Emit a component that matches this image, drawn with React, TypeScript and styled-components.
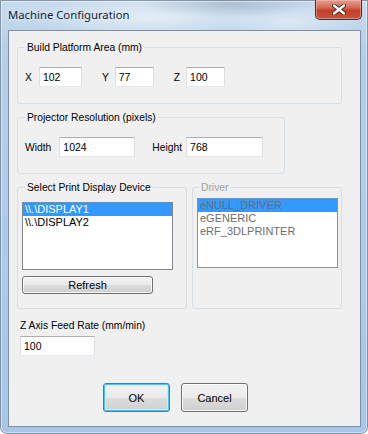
import * as React from 'react'
import styled, { createGlobalStyle } from 'styled-components'

const Global = createGlobalStyle`
  html, body { margin: 0; padding: 0; background: #fff; }
  * { box-sizing: border-box; }
`

const Window = styled.div`
  width: 368px;
  height: 434px;
  display: flex;
  flex-direction: column;
  padding: 0 7px 7px 8px;
  border-radius: 0 0 7px 7px;
  overflow: hidden;
  background:
    radial-gradient(ellipse 90px 14px at 230px 4px, rgba(120, 140, 160, 0.35), transparent),
    radial-gradient(ellipse 120px 22px at 150px 18px, rgba(255, 255, 255, 0.55), transparent),
    radial-gradient(ellipse 70px 18px at 290px 22px, rgba(255, 255, 255, 0.45), transparent),
    linear-gradient(to bottom, #c9dcee 0%, #b5cfe8 12%, #a8c7e6 100%);
  box-shadow: inset 0 0 0 1px rgba(60, 80, 105, 0.55), inset 0 0 0 2px rgba(255, 255, 255, 0.45);
`

const TitleBar = styled.div`
  height: 30px;
  flex: none;
  display: flex;
  justify-content: space-between;
  align-items: flex-start;
`

const Title = styled.span`
  margin-top: 7px;
  font-family: "Noto Sans", "Open Sans", sans-serif;
  font-size: 11.3px;
  line-height: 16px;
  color: #14233a;
  text-shadow: 0 0 6px rgba(255, 255, 255, 0.9);
`

const CloseButton = styled.div`
  width: 47px;
  height: 20px;
  margin-right: -1px;
  display: flex;
  align-items: center;
  justify-content: center;
  border: 1px solid #5a2a26;
  border-top: none;
  border-radius: 0 0 5px 5px;
  background: linear-gradient(to bottom, #e2a08f 0%, #d16b57 40%, #c2402a 55%, #c9543b 100%);
  box-shadow: inset 0 0 0 1px rgba(255, 200, 190, 0.45);
`

const Client = styled.div`
  flex: 1;
  display: flex;
  flex-direction: column;
  align-items: flex-start;
  padding: 10px 0 0 8px;
  background: #f0f0f0;
  border: 1px solid #7b8fa6;
  font-family: "Liberation Sans", Arial, sans-serif;
  font-size: 10.3px;
  color: #000;
`

const Group = styled.fieldset<{ $w: number; $h: number; $pt: number; $pl: number }>`
  margin: 0;
  width: ${p => p.$w}px;
  height: ${p => p.$h}px;
  padding: ${p => p.$pt}px 0 0 ${p => p.$pl}px;
  border: 1px solid #d5dfe5;
  border-radius: 3px;
  min-width: 0;
`

const Legend = styled.legend<{ $ml: number; $disabled?: boolean }>`
  margin-left: ${p => p.$ml}px;
  padding: 0 2px;
  line-height: 13px;
  color: ${p => (p.$disabled ? '#a0a0a0' : '#000')};
`

const Row = styled.div`
  display: flex;
  align-items: center;
`

const GroupRow = styled.div`
  display: flex;
  margin-top: 7px;
  gap: 5px;
`

const Label = styled.span<{ $ml?: number; $gap: number }>`
  margin-left: ${p => p.$ml ?? 0}px;
  margin-right: ${p => p.$gap}px;
  line-height: 13px;
`

const TextBox = styled.input<{ $w: number }>`
  width: ${p => p.$w}px;
  height: 20px;
  margin: 0;
  padding: 0 0 0 3px;
  border: 1px solid #dbdfe6;
  border-top-color: #abadb3;
  border-bottom-color: #e3e9ef;
  background: #fff;
  font-family: "Liberation Sans", Arial, sans-serif;
  font-size: 10.5px;
  color: #000;
  outline: none;
`

const ListBox = styled.div<{ $w: number; $h: number; $disabled?: boolean }>`
  width: ${p => p.$w}px;
  height: ${p => p.$h}px;
  border: 1px solid ${p => (p.$disabled ? '#8e8f8f' : '#828790')};
  background: #fff;
  color: ${p => (p.$disabled ? '#6d6d6d' : '#000')};
`

const ListItem = styled.div<{ $selected?: boolean; $disabled?: boolean }>`
  height: 13px;
  line-height: 13px;
  padding-left: 2px;
  font-size: 11px;
  background: ${p => (p.$selected ? '#3399ff' : 'transparent')};
  color: ${p => (p.$selected && !p.$disabled ? '#fff' : 'inherit')};
`

const PushButton = styled.button<{ $w: number; $h: number; $default?: boolean }>`
  width: ${p => p.$w}px;
  height: ${p => p.$h}px;
  margin: 0;
  padding: 0;
  border: 1px solid ${p => (p.$default ? '#3c7fb1' : '#707070')};
  border-radius: 3px;
  background: linear-gradient(to bottom, #f2f2f2 0%, #ebebeb 50%, #dddddd 51%, #cfcfcf 100%);
  box-shadow: ${p =>
    p.$default
      ? 'inset 0 0 0 1px #48c8f0, inset 0 0 0 2px #c8ecfa'
      : 'inset 0 0 0 1px rgba(255, 255, 255, 0.8)'};
  font-family: "Liberation Sans", Arial, sans-serif;
  font-size: 11px;
  color: #000;
`

const ZLabel = styled.div`
  margin: 10px 0 0 3px;
  line-height: 13px;
`

const ZBox = styled(TextBox)`
  margin: 4px 0 0 3px;
`

const Buttons = styled.div`
  display: flex;
  gap: 11px;
  margin: 27px 0 0 86px;
`

const RefreshWrap = styled.div`
  margin-top: 6px;
`

const CloseGlyph = () => (
  <svg width="14" height="11" viewBox="0 0 14 11">
    <path
      d="M2 1.5 L12 9.5 M12 1.5 L2 9.5"
      stroke="#4a2420"
      strokeWidth="4.2"
      strokeLinecap="round"
    />
    <path
      d="M2 1.5 L12 9.5 M12 1.5 L2 9.5"
      stroke="#ffffff"
      strokeWidth="2.4"
      strokeLinecap="round"
    />
  </svg>
)

export default function App() {
  return (
    <>
      <Global />
      <Window>
        <TitleBar>
          <Title>Machine Configuration</Title>
          <CloseButton>
            <CloseGlyph />
          </CloseButton>
        </TitleBar>
        <Client>
          <Group $w={325} $h={63} $pt={13} $pl={7}>
            <Legend $ml={0}>Build Platform Area (mm)</Legend>
            <Row>
              <Label $gap={7}>X</Label>
              <TextBox $w={43} readOnly value="102" />
              <Label $ml={20} $gap={6}>Y</Label>
              <TextBox $w={39} readOnly value="77" />
              <Label $ml={20} $gap={6}>Z</Label>
              <TextBox $w={39} readOnly value="100" />
            </Row>
          </Group>
          <Group $w={268} $h={63} $pt={13} $pl={7} style={{ marginTop: 7 }}>
            <Legend $ml={0}>Projector Resolution (pixels)</Legend>
            <Row>
              <Label $gap={8}>Width</Label>
              <TextBox $w={76} readOnly value="1024" />
              <Label $ml={17} $gap={4}>Height</Label>
              <TextBox $w={77} readOnly value="768" />
            </Row>
          </Group>
          <GroupRow>
            <Group $w={170} $h={128} $pt={8} $pl={4}>
              <Legend $ml={3}>Select Print Display Device</Legend>
              <ListBox $w={151} $h={68}>
                <ListItem $selected>\\.\DISPLAY1</ListItem>
                <ListItem>\\.\DISPLAY2</ListItem>
              </ListBox>
              <RefreshWrap>
                <PushButton $w={131} $h={18}>Refresh</PushButton>
              </RefreshWrap>
            </Group>
            <Group $w={150} $h={128} $pt={4} $pl={4}>
              <Legend $ml={2} $disabled>Driver</Legend>
              <ListBox $w={141} $h={70} $disabled>
                <ListItem $selected $disabled>eNULL_DRIVER</ListItem>
                <ListItem $disabled>eGENERIC</ListItem>
                <ListItem $disabled>eRF_3DLPRINTER</ListItem>
              </ListBox>
            </Group>
          </GroupRow>
          <ZLabel>Z Axis Feed Rate (mm/min)</ZLabel>
          <ZBox $w={75} readOnly value="100" />
          <Buttons>
            <PushButton $w={67} $h={29} $default>OK</PushButton>
            <PushButton $w={67} $h={29}>Cancel</PushButton>
          </Buttons>
        </Client>
      </Window>
    </>
  )
}
